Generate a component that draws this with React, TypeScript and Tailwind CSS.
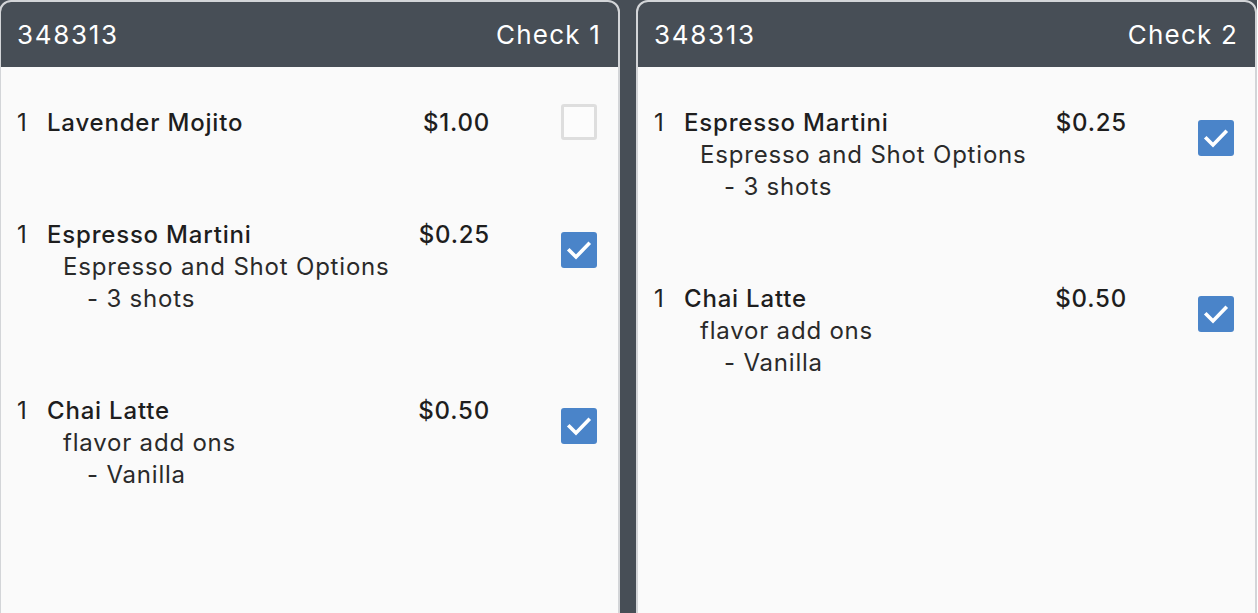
import React from "react";

type Line = { text: string; level: 0 | 1 | 2 };
type Item = { qty: number; name: string; price: string; mods: Line[]; checked: boolean };

const check1: Item[] = [
  { qty: 1, name: "Lavender Mojito", price: "$1.00", mods: [], checked: false },
  {
    qty: 1,
    name: "Espresso Martini",
    price: "$0.25",
    mods: [
      { text: "Espresso and Shot Options", level: 1 },
      { text: "- 3 shots", level: 2 },
    ],
    checked: true,
  },
  {
    qty: 1,
    name: "Chai Latte",
    price: "$0.50",
    mods: [
      { text: "flavor add ons", level: 1 },
      { text: "- Vanilla", level: 2 },
    ],
    checked: true,
  },
];

const check2: Item[] = [check1[1], check1[2]];

function Checkbox({ checked }: { checked: boolean }) {
  if (checked) {
    return (
      <div className="w-[36px] h-[36px] rounded-[3px] bg-[#4a84c9] flex items-center justify-center">
        <svg width="28" height="28" viewBox="0 0 28 28" fill="none">
          <path d="M4.5 14.5 L11 21 L23.5 8" stroke="white" strokeWidth="3.6" strokeLinecap="square" />
        </svg>
      </div>
    );
  }
  return <div className="w-[36px] h-[36px] rounded-[3px] border-[3px] border-[#dedede] bg-[#fcfcfc]" />;
}

function Row({ item }: { item: Item }) {
  const multi = item.mods.length > 0;
  return (
    <div className="flex items-start">
      <div className="flex-1 min-w-0 whitespace-nowrap">
        <div className="flex h-[32px] items-center pt-[1px]">
          <span className="w-[30px] pl-[16px] box-content text-[#222]">{item.qty}</span>
          <span className="font-medium text-[#1e1e1e]">{item.name}</span>
        </div>
        {item.mods.map((m, i) => (
          <div
            key={i}
            className={`h-[32px] flex items-center pt-[1px] whitespace-nowrap text-[#2a2a2a] ${m.level === 1 ? "pl-[62px]" : "pl-[86px]"}`}
          >
            {m.text}
          </div>
        ))}
      </div>
      <div className="w-[120px] shrink-0 h-[32px] pt-[1px] flex items-center justify-end font-medium text-[#1e1e1e]">{item.price}</div>
      <div className={`shrink-0 pl-[71px] pr-[21px] flex items-center ${multi ? "h-[64px]" : "h-[32px]"}`}>
        <Checkbox checked={item.checked} />
      </div>
    </div>
  );
}

function Panel({ title, items }: { title: string; items: Item[] }) {
  return (
    <div className="w-[621px] shrink-0 h-[640px] border-2 border-[#d3d5d8] rounded-t-[12px] overflow-hidden bg-[#fafafa] flex flex-col">
      <div className="h-[65px] bg-[#474e56] flex items-center justify-between pl-[16px] pr-[17px] text-white text-[26px] tracking-[1.2px] shrink-0">
        <span className="tracking-[1.7px]">348313</span>
        <span>{title}</span>
      </div>
      <div className="pt-[39px] flex flex-col gap-[80px]">
        {items.map((it, i) => (
          <Row key={i} item={it} />
        ))}
      </div>
    </div>
  );
}

export default function App() {
  return (
    <div
      className="w-[1258px] h-[613px] overflow-hidden bg-[#474e56] flex gap-[16px] text-[24px] leading-[32px] tracking-[0.8px] -ml-[1px]"
      style={{ fontFamily: "Inter, 'Noto Sans', sans-serif" }}
    >
      <Panel title="Check 1" items={check1} />
      <Panel title="Check 2" items={check2} />
    </div>
  );
}
